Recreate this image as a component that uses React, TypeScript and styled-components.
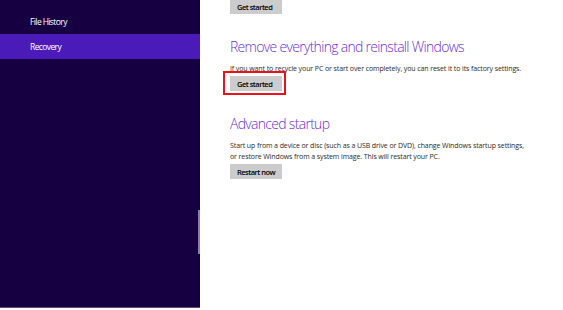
import React from 'react';
import styled, { createGlobalStyle } from 'styled-components';

const GlobalStyle = createGlobalStyle`
  html, body {
    margin: 0;
    padding: 0;
    background: #ffffff;
    overflow: hidden;
  }
  body {
    font-family: 'Open Sans', 'Noto Sans', sans-serif;
  }
`;

const navItems = [
  { id: 'history', label: 'File History' },
  { id: 'recovery', label: 'Recovery', active: true },
];

const App: React.FC = () => {
  return (
    <Page>
      <GlobalStyle />
      <Sidebar>
        <NavList>
          {navItems.map((item) => (
            <NavItem key={item.id} $active={item.active}>
              {item.label}
            </NavItem>
          ))}
        </NavList>
        <ScrollThumb />
      </Sidebar>
      <Content>
        <TopButton>Get started</TopButton>
        <Section>
          <Heading>Remove everything and reinstall Windows</Heading>
          <Text>
            If you want to recycle your PC or start over completely, you can reset it to its factory settings.
          </Text>
          <Highlight>
            <Button>Get started</Button>
          </Highlight>
        </Section>
        <Section>
          <Heading>Advanced startup</Heading>
          <Text>
            Start up from a device or disc (such as a USB drive or DVD), change Windows startup settings,
            <br />
            or restore Windows from a system image. This will restart your PC.
          </Text>
          <Button $gap>Restart now</Button>
        </Section>
      </Content>
    </Page>
  );
};

const Page = styled.div`
  display: flex;
  width: 563px;
  height: 310px;
  background: #ffffff;
`;

const Sidebar = styled.div`
  position: relative;
  width: 200px;
  height: 307px;
  flex-shrink: 0;
  background: #170042;
  border-bottom: 1px solid #5b4d80;
`;

const NavList = styled.div`
  display: flex;
  flex-direction: column;
  padding-top: 9px;
`;

const NavItem = styled.div<{ $active?: boolean }>`
  height: 25px;
  display: flex;
  align-items: center;
  padding-left: 30px;
  font-size: 8.5px;
  letter-spacing: -0.6px;
  color: #ffffff;
  background: ${(p) => (p.$active ? '#4a1bb8' : 'transparent')};
`;

const ScrollThumb = styled.div`
  position: absolute;
  right: 0;
  top: 210px;
  width: 2px;
  height: 44px;
  background: #8b7fb0;
`;

const Content = styled.div`
  flex: 1;
  padding-left: 30px;
  display: flex;
  flex-direction: column;
  align-items: flex-start;
`;

const Button = styled.div<{ $gap?: boolean }>`
  box-sizing: border-box;
  height: 15px;
  min-width: 52px;
  margin-top: ${(p) => (p.$gap ? '2px' : '0')};
  padding: 0 7px;
  display: flex;
  align-items: center;
  background: #cccccc;
  color: #000000;
  font-size: 7.5px;
  font-weight: 600;
  letter-spacing: -0.5px;
`;

const TopButton = styled(Button)`
  margin-top: -1px;
`;

const Section = styled.div`
  display: flex;
  flex-direction: column;
  align-items: flex-start;
  margin-top: 22px;
`;

const Heading = styled.div`
  padding-top: 1px;
  font-size: 14px;
  font-weight: 300;
  letter-spacing: -0.7px;
  color: #6a30d6;
  line-height: 20px;
`;

const Text = styled.div`
  margin-top: 6px;
  font-size: 7px;
  letter-spacing: -0.1px;
  line-height: 11px;
  color: #2a2a2a;
`;

const Highlight = styled.div`
  position: relative;
  margin-top: 2px;

  &::after {
    content: '';
    position: absolute;
    left: -7px;
    right: -4px;
    top: -5px;
    bottom: -4px;
    border: 2px solid #e8121c;
  }
`;

export default App;
